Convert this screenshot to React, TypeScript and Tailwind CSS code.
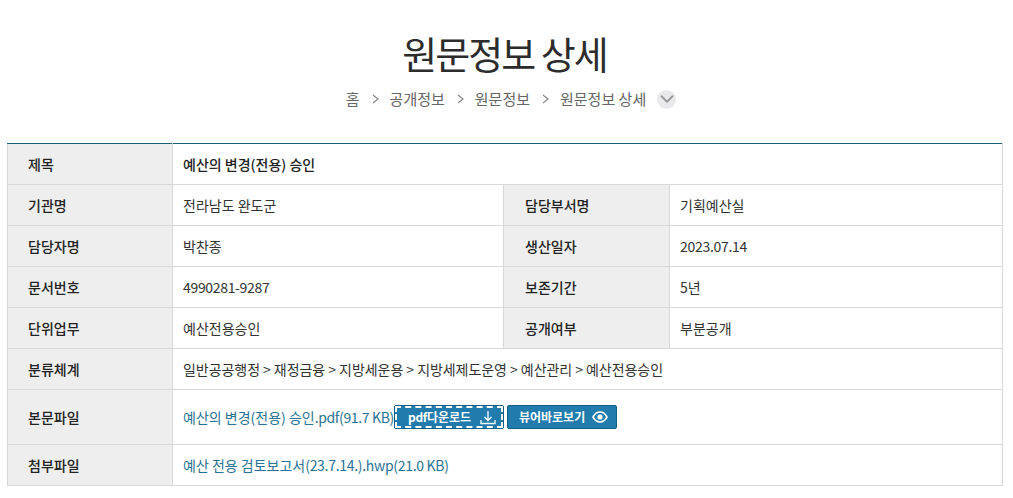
import React from 'react';
import { ChevronDown } from 'lucide-react';

const font = "font-['Noto_Sans_CJK_KR','Noto_Sans',sans-serif]";
const thClass = 'border border-[#d8d8d8] bg-[#eeeeee] text-left text-[14px] font-medium text-[#222222]';
const tdClass = 'border border-[#d8d8d8] pl-[10px] text-left text-[14px]';
const btnClass = 'relative flex h-[24px] w-[110px] items-center rounded-[2px] border border-[#145d85] bg-[#227bad] text-[12px] font-bold text-white';

const rows = [
  ['기관명', '전라남도 완도군', '담당부서명', '기획예산실'],
  ['담당자명', '박찬종', '생산일자', '2023.07.14'],
  ['문서번호', '4990281-9287', '보존기간', '5년'],
  ['단위업무', '예산전용승인', '공개여부', '부분공개'],
];

const crumbs = ['공개정보', '원문정보', '원문정보 상세'];

export default function App() {
  return (
    <div className={`${font} h-[498px] w-[1013px] overflow-hidden bg-white`}>
      <h1 className="pt-[27px] pr-[4px] text-center text-[38px] leading-[52px] font-normal tracking-[-2px] text-[#2c2c2c]">원문정보 상세</h1>
      <div className="mt-[9px] flex h-[22px] items-center justify-center pl-[9px] text-[15px] text-[#666666]">
        <span>홈</span>
        {crumbs.map((crumb) => (
          <React.Fragment key={crumb}>
            <span className="mr-[11px] ml-[12px] text-[#888888]">
              <svg width="7" height="10" viewBox="0 0 7 10" fill="none" stroke="currentColor" strokeWidth="1.2">
                <path d="M1 1l5 4-5 4" />
              </svg>
            </span>
            <span>{crumb}</span>
          </React.Fragment>
        ))}
        <span className="ml-[11px] flex h-[19px] w-[19px] items-center justify-center rounded-full bg-[#e9e9ec]">
          <ChevronDown size={22} strokeWidth={2} className="shrink-0 text-[#999999]" />
        </span>
      </div>
      <div className="mt-[33px] px-[7px]">
        <table className="w-[995px] table-fixed border-collapse border-t border-t-[#1d5f70]">
          <colgroup>
            <col className="w-[165px]" />
            <col className="w-[331px]" />
            <col className="w-[166px]" />
            <col className="w-[333px]" />
          </colgroup>
          <tbody>
            <tr className="h-[41px]">
              <th className={`${thClass} border-t-[#1d5f70] pl-[20px]`}>제목</th>
              <td colSpan={3} className={`${tdClass} border-t-[#1d5f70] font-medium text-[#222222]`}>예산의 변경(전용) 승인</td>
            </tr>
            {rows.map((row) => (
              <tr key={row[0]} className="h-[41px]">
                <th className={`${thClass} pl-[20px]`}>{row[0]}</th>
                <td className={`${tdClass} text-[#333333]`}>
                  <span className={row[0] === '문서번호' ? 'tracking-[-0.33px]' : ''}>{row[1]}</span>
                </td>
                <th className={`${thClass} pl-[21px]`}>{row[2]}</th>
                <td className={`${tdClass} text-[#333333]`}>
                  <span className={row[0] === '담당자명' ? 'tracking-[-0.3px]' : ''}>{row[3]}</span>
                </td>
              </tr>
            ))}
            <tr className="h-[41px]">
              <th className={`${thClass} pl-[20px]`}>분류체계</th>
              <td colSpan={3} className={`${tdClass} tracking-[-0.05px] text-[#333333]`}>일반공공행정 &gt; 재정금융 &gt; 지방세운용 &gt; 지방세제도운영 &gt; 예산관리 &gt; 예산전용승인</td>
            </tr>
            <tr className="h-[55px]">
              <th className={`${thClass} pl-[20px]`}>본문파일</th>
              <td colSpan={3} className={tdClass}>
                <div className="flex items-center">
                  <span className="text-[#2a7396]">
                    예산의 변경(전용) 승인<span className="tracking-[-0.35px]">.pdf(91.7 KB)</span>
                  </span>
                  <button className={`${btnClass} pl-[13px] outline-2 -outline-offset-3 outline-dashed outline-white`}>
                    <span className="tracking-[-0.3px]">pdf</span>다운로드
                    <svg className="absolute right-[7px] top-[4px]" width="16" height="15" viewBox="0 0 16 15" fill="none" stroke="currentColor" strokeWidth="1.3">
                      <path d="M8 1v9M4.5 7L8 10.5 11.5 7M1 10v3.5h14V10" />
                    </svg>
                  </button>
                  <button className={`${btnClass} ml-[3px] pl-[11px]`}>
                    뷰어바로보기
                    <svg className="absolute right-[8px] top-[4px]" width="16" height="14" viewBox="0 0 16 14" fill="none" stroke="currentColor" strokeWidth="1.6">
                      <path d="M1 7c2-3.6 4.6-5 7-5s5 1.4 7 5c-2 3.6-4.6 5-7 5s-5-1.4-7-5z" />
                      <circle cx="8" cy="7" r="2.6" fill="currentColor" stroke="none" />
                    </svg>
                  </button>
                </div>
              </td>
            </tr>
            <tr className="h-[41px]">
              <th className={`${thClass} pl-[20px]`}>첨부파일</th>
              <td colSpan={3} className={`${tdClass} text-[#2a7396]`}>
                예산 전용 검토보고서<span className="tracking-[-0.3px]">(23.7.14.).hwp(21.0 KB)</span>
              </td>
            </tr>
          </tbody>
        </table>
      </div>
    </div>
  );
}
